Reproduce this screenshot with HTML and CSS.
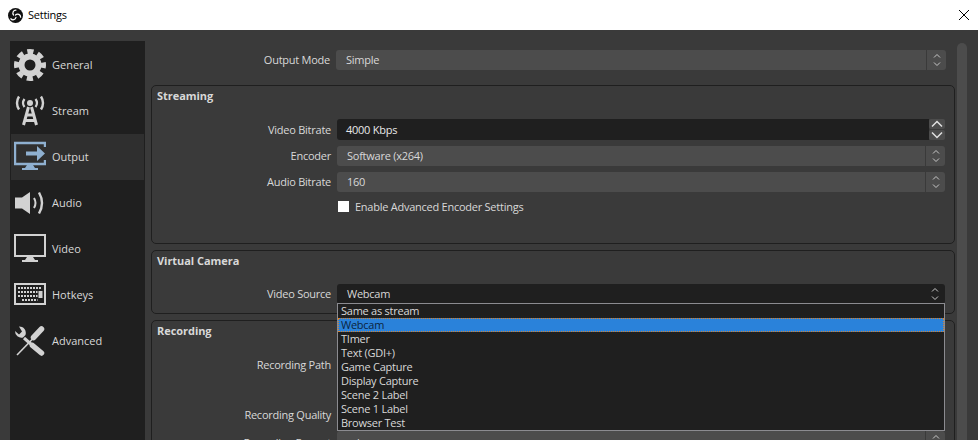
FILE: index.html
```html
<!DOCTYPE html>
<html lang="en">
<head>
    <meta charset="UTF-8">
    <title>Settings</title>
    <link rel="stylesheet" href="styles.css">
</head>
<body>
    <div class="titlebar">
        <svg class="logo" viewBox="0 0 16 16">
            <circle cx="8" cy="8" r="8" fill="#111"/>
            <g fill="none" stroke="#fff" stroke-width="1.300" stroke-linecap="round">
                <path d="M8.500 2.200A3.200 3.200 0 0 0 6 7.500"/>
                <path d="M13.500 9.800A3.200 3.200 0 0 0 8 7.500"/>
                <path d="M3 11.500A3.200 3.200 0 0 0 8.500 10"/>
            </g>
        </svg>
        <span class="title">Settings</span>
        <svg class="close" viewBox="0 0 10 10"><path d="M0 0L10 10M10 0L0 10" stroke="#000" stroke-width="1" fill="none"/></svg>
    </div>
    <div class="content">
        <ul class="sidebar">
            <li class="nav-item">
                <svg class="nav-icon" viewBox="0 0 32 32">
                    <circle cx="16" cy="16" r="8.500" fill="none" stroke="#d2d2d2" stroke-width="6"/>
                    <circle cx="16" cy="16" r="13.500" fill="none" stroke="#d2d2d2" stroke-width="5" stroke-dasharray="6.200 4.400" stroke-dashoffset="3.100"/>
                </svg>
                <span class="nav-label">General</span>
            </li>
            <li class="nav-item">
                <svg class="nav-icon" viewBox="0 0 32 32">
                    <circle cx="16" cy="8" r="3" fill="#d2d2d2"/>
                    <path d="M10.500 4Q7.500 8 10.500 12M21.500 4Q24.500 8 21.500 12" fill="none" stroke="#d2d2d2" stroke-width="2.200"/>
                    <path d="M5 1.500Q1 8 5 14.500M27 1.500Q31 8 27 14.500" fill="none" stroke="#d2d2d2" stroke-width="2.400"/>
                    <path d="M14.500 12L9.500 30M17.500 12L22.500 30M13 20H19M11 25.500H21" fill="none" stroke="#d2d2d2" stroke-width="3"/>
                </svg>
                <span class="nav-label">Stream</span>
            </li>
            <li class="nav-item selected">
                <svg class="nav-icon" viewBox="0 0 32 32">
                    <path d="M31 6V2H1V23H31V19" fill="none" stroke="#8fb0d0" stroke-width="2.400"/>
                    <path d="M13 24h6l2 3h3v2H8v-2h3z" fill="#8fb0d0"/>
                    <path d="M12 10.500h11V5l8 7.500-8 7.500v-5.500H12z" fill="#8fb0d0"/>
                </svg>
                <span class="nav-label">Output</span>
            </li>
            <li class="nav-item">
                <svg class="nav-icon" viewBox="0 0 32 32">
                    <path d="M1 10.500h7L16 5V27L8 21.500H1z" fill="#d2d2d2"/>
                    <path d="M20 11Q23 16 20 21" fill="none" stroke="#d2d2d2" stroke-width="2"/>
                    <path d="M25 5.500Q31 16 25 26.500" fill="none" stroke="#d2d2d2" stroke-width="2.400"/>
                </svg>
                <span class="nav-label">Audio</span>
            </li>
            <li class="nav-item">
                <svg class="nav-icon" viewBox="0 0 32 32">
                    <rect x="1" y="2" width="30" height="21" fill="none" stroke="#d2d2d2" stroke-width="2"/>
                    <path d="M13 24h6l2 3h3v2H8v-2h3z" fill="#d2d2d2"/>
                </svg>
                <span class="nav-label">Video</span>
            </li>
            <li class="nav-item">
                <svg class="nav-icon" viewBox="0 0 32 32">
                    <rect x="1" y="5" width="30" height="20" fill="none" stroke="#d2d2d2" stroke-width="2"/>
                    <path d="M4 9H28M4 13H23.500M4 17H23.500M8 21H23.500" fill="none" stroke="#d2d2d2" stroke-width="2" stroke-dasharray="2 1"/>
                    <rect x="24.500" y="12" width="4" height="7" fill="#d2d2d2"/>
                </svg>
                <span class="nav-label">Hotkeys</span>
            </li>
            <li class="nav-item">
                <svg class="nav-icon" viewBox="0 0 32 32">
                    <path d="M10 13L18 20" fill="none" stroke="#d2d2d2" stroke-width="3"/>
                    <path d="M18.500 20.500L27.500 28" fill="none" stroke="#d2d2d2" stroke-width="5.500" stroke-linecap="round"/>
                    <path d="M5 1.500A6.500 6.500 0 0 1 11.500 10L9 12.500A6.500 6.500 0 0 1 1 6L5 9.500L8 6.500z" fill="#d2d2d2"/>
                    <path d="M27.500 4L19.500 12.500" fill="none" stroke="#d2d2d2" stroke-width="5.500" stroke-linecap="round"/>
                    <path d="M19 13.500L3 30" fill="none" stroke="#d2d2d2" stroke-width="1.600"/>
                </svg>
                <span class="nav-label">Advanced</span>
            </li>
        </ul>
        <div class="main">
            <div class="panel">
                <div class="form-row top-row">
                    <label class="form-label">Output Mode</label>
                    <div class="combo">
                        <span class="combo-text">Simple</span>
                        <span class="combo-arrows"><svg viewBox="0 0 8 14"><path d="M1 4.500L4 1.500L7 4.500M1 9.500L4 12.500L7 9.500" fill="none" stroke="#c8c8c8"/></svg></span>
                    </div>
                </div>

                <section class="group streaming">
                    <h2 class="group-title">Streaming</h2>
                    <div class="form-row spin-row">
                        <label class="form-label">Video Bitrate</label>
                        <div class="spinbox">
                            <span class="spin-value">4000 Kbps</span>
                            <span class="spin-buttons">
                                <span class="spin-btn"><svg viewBox="0 0 12 8"><path d="M1 6.500L6 1.500L11 6.500" fill="none" stroke="#e0e0e0" stroke-width="1.500"/></svg></span>
                                <span class="spin-btn"><svg viewBox="0 0 12 8"><path d="M1 1.500L6 6.500L11 1.500" fill="none" stroke="#e0e0e0" stroke-width="1.500"/></svg></span>
                            </span>
                        </div>
                    </div>
                    <div class="form-row">
                        <label class="form-label">Encoder</label>
                        <div class="combo">
                            <span class="combo-text">Software (x264)</span>
                            <span class="combo-arrows"><svg viewBox="0 0 8 14"><path d="M1 4.500L4 1.500L7 4.500M1 9.500L4 12.500L7 9.500" fill="none" stroke="#c8c8c8"/></svg></span>
                        </div>
                    </div>
                    <div class="form-row">
                        <label class="form-label">Audio Bitrate</label>
                        <div class="combo">
                            <span class="combo-text">160</span>
                            <span class="combo-arrows"><svg viewBox="0 0 8 14"><path d="M1 4.500L4 1.500L7 4.500M1 9.500L4 12.500L7 9.500" fill="none" stroke="#c8c8c8"/></svg></span>
                        </div>
                    </div>
                    <div class="check-row">
                        <span class="checkbox"></span>
                        <span>Enable Advanced Encoder Settings</span>
                    </div>
                </section>

                <section class="group virtual-cam">
                    <h2 class="group-title">Virtual Camera</h2>
                    <div class="form-row">
                        <label class="form-label">Video Source</label>
                        <div class="combo open">
                            <span class="combo-text">Webcam</span>
                            <span class="combo-arrows"><svg viewBox="0 0 8 14"><path d="M1 4.500L4 1.500L7 4.500M1 9.500L4 12.500L7 9.500" fill="none" stroke="#c8c8c8"/></svg></span>
                            <ul class="popup">
                                <li>Same as stream</li>
                                <li class="current">Webcam</li>
                                <li>TImer</li>
                                <li>Text (GDI+)</li>
                                <li>Game Capture</li>
                                <li>Display Capture</li>
                                <li>Scene 2 Label</li>
                                <li>Scene 1 Label</li>
                                <li>Browser Test</li>
                            </ul>
                        </div>
                    </div>
                </section>

                <section class="group recording">
                    <h2 class="group-title">Recording</h2>
                    <div class="form-row path-row">
                        <label class="form-label">Recording Path</label>
                        <div class="combo"></div>
                    </div>
                    <div class="form-row quality-row">
                        <label class="form-label">Recording Quality</label>
                        <div class="combo"></div>
                    </div>
                    <div class="form-row format-row">
                        <label class="form-label">Recording Format</label>
                        <div class="combo">
                            <span class="combo-text">mkv</span>
                            <span class="combo-arrows"><svg viewBox="0 0 8 14"><path d="M1 4.500L4 1.500L7 4.500M1 9.500L4 12.500L7 9.500" fill="none" stroke="#c8c8c8"/></svg></span>
                        </div>
                    </div>
                </section>
            </div>
            <div class="scrollbar"></div>
        </div>
    </div>
</body>
</html>
```

FILE: styles.css
```css
* {
    box-sizing: border-box;
}
html, body {
    height: 440px;
    margin: 0;
    overflow: hidden;
}
body {
    font-family: "Open Sans", sans-serif;
    font-size: 11px;
    letter-spacing: -0.25px;
    color: #d8d8d8;
    background: #3a3a3a;
    display: flex;
    flex-direction: column;
}
.titlebar {
    height: 30px;
    flex: none;
    background: #fff;
    color: #000;
    display: flex;
    align-items: center;
    padding: 0 9px 0 8px;
}
.logo {
    width: 15px;
    height: 15px;
    margin-right: 5px;
}
.title {
    flex: 1;
    padding-bottom: 2px;
}
.close {
    width: 10px;
    height: 10px;
}
.content {
    flex: 1;
    display: flex;
    min-height: 0;
}
.sidebar {
    list-style: none;
    width: 135px;
    flex: none;
    margin: 11px 0 0 10px;
    padding: 1px;
    background: #1f1f1f;
}
.nav-item {
    height: 46px;
    display: flex;
    align-items: center;
    gap: 6px;
    padding-left: 3px;
}
.nav-item.selected {
    background: #2f2f2f;
}
.nav-icon {
    width: 32px;
    height: 32px;
    flex: none;
}
.nav-label {
    padding-bottom: 1px;
    letter-spacing: 0;
}
.main {
    flex: 1;
    display: flex;
    min-width: 0;
    padding-left: 6px;
}
.panel {
    width: 804px;
    flex: none;
    padding-top: 20px;
}
.form-row {
    display: flex;
    align-items: center;
    gap: 6px;
    margin-right: 9px;
    height: 20px;
    margin-bottom: 6px;
}
.form-label {
    width: 179px;
    flex: none;
    text-align: right;
    padding-bottom: 2px;
}
.spin-row .form-label,
.path-row .form-label,
.quality-row .form-label {
    padding-bottom: 0;
}
.format-row .form-label,
.format-row .combo-text {
    padding: 2px 0 0;
}
.top-row {
    margin: 0 9px 15px 0;
}
.combo {
    position: relative;
    flex: 1;
    height: 20px;
    background: #4c4c4c;
    border-radius: 3px;
    display: flex;
    align-items: center;
    justify-content: space-between;
    padding-left: 10px;
}
.combo-text {
    padding-bottom: 2px;
}
.combo-arrows {
    width: 20px;
    height: 100%;
    border-left: 1px solid #3a3a3a;
    display: flex;
    align-items: center;
    justify-content: center;
}
.combo-arrows svg {
    width: 8px;
    height: 14px;
}
.combo.open {
    background: #1f1f1f;
}
.combo.open .combo-arrows {
    border-left: none;
}
.popup {
    position: absolute;
    top: 19px;
    left: 0;
    right: 0;
    z-index: 5;
    list-style: none;
    margin: 0;
    padding: 0;
    background: #1f1f1f;
    border: 1px solid #8b8b90;
}
.popup li {
    height: 14px;
    line-height: 14px;
    padding-left: 3px;
}
.popup .current {
    background: #2a82da;
    color: #0c2440;
    outline: 1px dotted #d9822b;
    outline-offset: -1px;
}
.group {
    border: 1px solid #1f1f1f;
    border-radius: 5px;
    margin-bottom: 6px;
}
.group-title {
    margin: 0;
    padding: 0 0 0 5px;
    height: 21px;
    line-height: 19px;
    font-size: 11px;
    font-weight: bold;
    letter-spacing: -0.05px;
}
.streaming .group-title {
    margin-bottom: 12px;
}
.spin-row {
    height: 21px;
}
.spinbox {
    flex: 1;
    height: 21px;
    display: flex;
}
.spin-value {
    flex: 1;
    background: #1f1f1f;
    border-radius: 3px 0 0 3px;
    padding-left: 9px;
    line-height: 21px;
    color: #e8e8e8;
}
.spin-buttons {
    width: 16px;
    display: flex;
    flex-direction: column;
    gap: 1px;
}
.spin-btn {
    flex: 1;
    background: #4c4c4c;
    border-radius: 2px;
    display: flex;
    align-items: center;
    justify-content: center;
}
.spin-btn svg {
    width: 12px;
    height: 8px;
}
.check-row {
    display: flex;
    align-items: center;
    gap: 6px;
    height: 16px;
    margin: 1px 0 29px 185px;
}
.checkbox {
    width: 11px;
    height: 11px;
    background: #fff;
    margin-left: 1px;
}
.virtual-cam .group-title {
    margin-bottom: 12px;
}
.virtual-cam .form-row {
    margin-bottom: 9px;
}
.recording .group-title {
    margin-bottom: 12px;
}
.recording .form-row {
    margin-bottom: 30px;
}
.recording .quality-row {
    margin-bottom: 7px;
}
.scrollbar {
    width: 10px;
    flex: none;
    height: 420px;
    margin: 13px 0 0 2px;
    background: #4c4c4c;
    border-radius: 5px 5px 0 0;
}
```
